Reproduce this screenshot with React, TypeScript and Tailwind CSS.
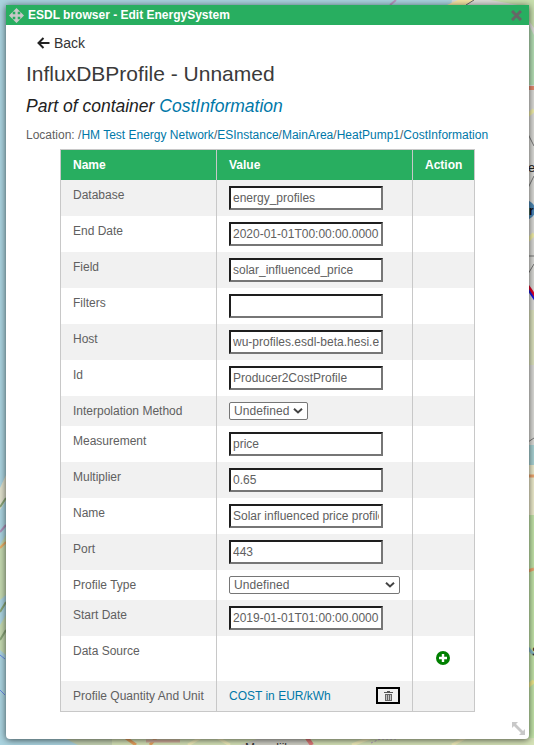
import React from "react";

type Row = {
  name: string;
  kind: "input" | "select" | "wide" | "add" | "link";
  value?: string;
};

const rows: Row[] = [
  { name: "Database", kind: "input", value: "energy_profiles" },
  { name: "End Date", kind: "input", value: "2020-01-01T00:00:00.0000" },
  { name: "Field", kind: "input", value: "solar_influenced_price" },
  { name: "Filters", kind: "input", value: "" },
  { name: "Host", kind: "input", value: "wu-profiles.esdl-beta.hesi.e" },
  { name: "Id", kind: "input", value: "Producer2CostProfile" },
  { name: "Interpolation Method", kind: "select", value: "Undefined" },
  { name: "Measurement", kind: "input", value: "price" },
  { name: "Multiplier", kind: "input", value: "0.65" },
  { name: "Name", kind: "input", value: "Solar influenced price profile" },
  { name: "Port", kind: "input", value: "443" },
  { name: "Profile Type", kind: "wide", value: "Undefined" },
  { name: "Start Date", kind: "input", value: "2019-01-01T01:00:00.0000" },
  { name: "Data Source", kind: "add" },
  { name: "Profile Quantity And Unit", kind: "link", value: "COST in EUR/kWh" },
];

const heights = {
  input: "h-9",
  select: "h-[30px]",
  wide: "h-[30px]",
  add: "h-[45px]",
  link: "h-[30px]",
};

const columns = "grid grid-cols-[155px_195px_61px] gap-x-px";

function MapBackground() {
  return (
    <svg className="absolute inset-0" width="534" height="745" viewBox="0 0 534 745" fill="none">
      <rect width="534" height="745" fill="#aad3df" />
      <path d="M452 0H534V745H500V30H447Z" fill="#dcdcd8" />
      <path d="M447 5L458 0H475L465 5Z" fill="#f7e5a4" />
      <path d="M490 0H534V28L518 5Z" fill="#c8dfae" />
      <path d="M390 5L396 0" stroke="#b797bf" strokeWidth="2" />
      <path d="M466 5L474 0" stroke="#666" />
      <path d="M529 25L534 35V85H529Z" fill="#b5dfb5" />
      <path d="M528 88H534" stroke="#e58b6f" strokeWidth="4" />
      <path d="M528 115L534 110M528 240L534 234" stroke="#f0eda8" strokeWidth="4" />
      <path d="M528 134L534 146M528 188L534 176M528 256H534M528 274L534 264M528 442L534 438" stroke="#777" />
      <circle cx="525" cy="210" r="10" fill="#4d88b4" />
      <path d="M528 286L536 298" stroke="#e10024" strokeWidth="3" />
      <path d="M527 288L535 300" stroke="#1616dd" strokeWidth="2" />
      <path d="M528 310H534V365H528Z" fill="#dde3bf" />
      <path d="M528 445H534V465H528Z" fill="#a9d2d4" />
      <path d="M528 465H534V515H528Z" fill="#eeeccd" />
      <path d="M528 515H534V745H528Z" fill="#c3e5a9" />
      <path d="M528 476H534M528 571L534 569" stroke="#eda66f" strokeWidth="3" />
      <path d="M528 648L534 655" stroke="#86b8c7" strokeWidth="3" />
      <path d="M528 686L534 681" stroke="#eee98c" strokeWidth="4" />
      <path d="M0 488L6 475V500L0 510Z" fill="#dfe0cc" />
      <path d="M0 545L6 535V595L0 600ZM0 625L6 615V655L0 650Z" fill="#c3d8af" />
      <path d="M0 507L6 498M0 612L6 602M0 640L6 630" stroke="#88a477" strokeWidth="2" />
      <path d="M0 532L6 525" stroke="#ac91b8" strokeWidth="2" />
      <path d="M0 548L6 542" stroke="#e9ae68" strokeWidth="2" />
      <path d="M0 655L5 659M0 690L5 695" stroke="#6687e5" />
      <path d="M112 738H534V745H112Z" fill="#d6e3b8" />
      <path d="M64 738L78 745H112V738Z" fill="#c5d3b3" />
      <path d="M126 738L136 745M156 738L150 745" stroke="#e6a15f" strokeWidth="3" />
      <path d="M146 741H180" stroke="#d8b2a0" strokeWidth="3" />
      <path d="M188 745L200 738M218 738L230 745M352 745L370 738M452 745L465 738" stroke="#f0edbb" strokeWidth="3" />
      <path d="M240 745L260 738H300L315 745Z" fill="#cfcfc5" />
      <path d="M307 738L312 745" stroke="#df7979" strokeWidth="4" />
      <path d="M371 743L380 739H396" stroke="#b29ac0" strokeDasharray="2 2" />
      <text x="245" y="752" fill="#333" className="font-['Liberation_Sans'] text-[12px]">Moerdijk</text>
      <text x="528" y="172" fill="#222" className="font-['Liberation_Sans'] text-[13px]">er</text>
      <text x="529" y="215" fill="#111" className="font-['Liberation_Sans'] text-[12px] font-bold">r</text>
      <text x="532" y="656" fill="#222" className="font-['Liberation_Sans'] text-[12px]">S</text>
    </svg>
  );
}

function Select({ wide, value }: { wide?: boolean; value?: string }) {
  return (
    <div className={`flex h-[18px] items-center justify-between rounded-[2px] border border-[#767676] bg-white pl-1 ${wide ? "w-[171px] pr-1" : "w-[79px] pr-1"}`}>
      <span className="tracking-[0.1px]">{value}</span>
      <svg width="10" height="6" viewBox="0 0 10 6" fill="none" stroke="#444" strokeWidth="2"><path d="M1 .8L5 4.5L9 .8" /></svg>
    </div>
  );
}

function ValueCell({ row }: { row: Row }) {
  if (row.kind === "input")
    return (
      <div className="h-6 w-[154px] border-2 border-t-[#1e1e1e] border-l-[#1e1e1e] border-r-[#767676] border-b-[#767676] bg-white px-[2px] leading-5">
        <div className="h-5 overflow-hidden whitespace-nowrap">{row.value}</div>
      </div>
    );
  if (row.kind === "select" || row.kind === "wide") return <Select wide={row.kind === "wide"} value={row.value} />;
  if (row.kind === "link")
    return (
      <div className="flex w-[171px] justify-between">
        <a className="leading-[18px] text-[#0078a8]">{row.value}</a>
        <button className="flex h-[17px] w-6 items-center justify-center border-2 border-black">
          <svg width="9" height="10" viewBox="0 0 9 10">
            <path d="M0 1H3V0H6V1H9V2H0Z" fill="#555" />
            <path d="M1 3H8V10H1Z" fill="#666" />
            <path d="M2.5 4V9M4.5 4V9M6.5 4V9" stroke="#ddd" strokeWidth=".8" />
          </svg>
        </button>
      </div>
    );
  return null;
}

export default function App() {
  return (
    <div className="relative h-[745px] w-[534px] overflow-hidden font-['Liberation_Sans',Arial,sans-serif] text-[12px] text-[#606060]">
      <MapBackground />
      <div className="relative pt-[5px] pl-[6px]">
        <main className="relative h-[734px] w-[523px] rounded-b-[4px] bg-white shadow-[0_1px_7px_rgba(0,0,0,0.65)]">
          <header className="flex h-5 items-center bg-[#28ae60] pr-[7px] pl-[3px] text-white">
            <svg width="15" height="15" viewBox="0 0 16 16" fill="#c8c8c8">
              <path d="M8 0L12 4H9.3V6.7H12V4L16 8L12 12V9.3H9.3V12H12L8 16L4 12H6.7V9.3H4V12L0 8L4 4V6.7H6.7V4H4Z" />
            </svg>
            <h1 className="ml-1 flex-1 text-[12px] leading-5 font-bold whitespace-nowrap">ESDL browser - Edit EnergySystem</h1>
            <svg width="11" height="11" viewBox="0 0 11 11" stroke="#666" strokeWidth="3"><path d="M1 1L10 10M10 1L1 10" /></svg>
          </header>
          <div className="pl-5">
            <div className="flex h-9 items-center pl-[11px] text-[14px] text-[#333]">
              <svg className="mr-1" width="13" height="12" viewBox="0 0 13 12" fill="none" stroke="#222" strokeWidth="2"><path d="M12.5 6H1.5M6.5 1L1.5 6L6.5 11" /></svg>
              Back
            </div>
            <h2 className="h-[30px] text-[21px] leading-[26px] text-[#3a3a3a]">InfluxDBProfile - Unnamed</h2>
            <h3 className="h-[33px] text-[17.5px] leading-[30px] text-[#222] italic">
              Part of container <a className="text-[#0078a8]">CostInformation</a>
            </h3>
            <div className="h-[25px] leading-[22px] whitespace-nowrap">
              Location: /<a className="text-[#0078a8]">HM Test Energy Network</a>/<a className="text-[#0078a8]">ESInstance</a>/<a className="text-[#0078a8]">MainArea</a>/<a className="text-[#0078a8]">HeatPump1</a>/<a className="text-[#0078a8]">CostInformation</a>
            </div>
          </div>
          <div className="ml-[54px] w-[415px] border border-[#c8c8c8] bg-[#c8c8c8]">
            <div className={`${columns} h-[30px] leading-[30px] font-bold text-white`}>
              <div className="bg-[#28ae60] pl-3">Name</div>
              <div className="bg-[#28ae60] pl-3">Value</div>
              <div className="bg-[#28ae60] pl-3">Action</div>
            </div>
            {rows.map((row, i) => {
              const bg = i % 2 === 0 ? "bg-[#f1f1f1]" : "bg-white";
              return (
                <div key={row.name} className={`${columns} ${heights[row.kind]}`}>
                  <div className={`${bg} pt-[6px] pl-3 leading-[18px] whitespace-nowrap`}>{row.name}</div>
                  <div className={`${bg} pt-[6px] pl-3`}><ValueCell row={row} /></div>
                  <div className={`${bg} pt-[15px] pl-[23px]`}>
                    {row.kind === "add" && (
                      <svg width="14" height="14" viewBox="0 0 14 14"><circle cx="7" cy="7" r="7" fill="#008000" /><path d="M7 3V11M3 7H11" stroke="white" strokeWidth="2.4" /></svg>
                    )}
                  </div>
                </div>
              );
            })}
          </div>
          <svg className="absolute right-1 bottom-1" width="13" height="13" viewBox="0 0 13 13" fill="#c8c8c8">
            <path d="M0 0H6L4 2L11 9L13 7V13H7L9 11L2 4L0 6Z" />
          </svg>
        </main>
      </div>
    </div>
  );
}
